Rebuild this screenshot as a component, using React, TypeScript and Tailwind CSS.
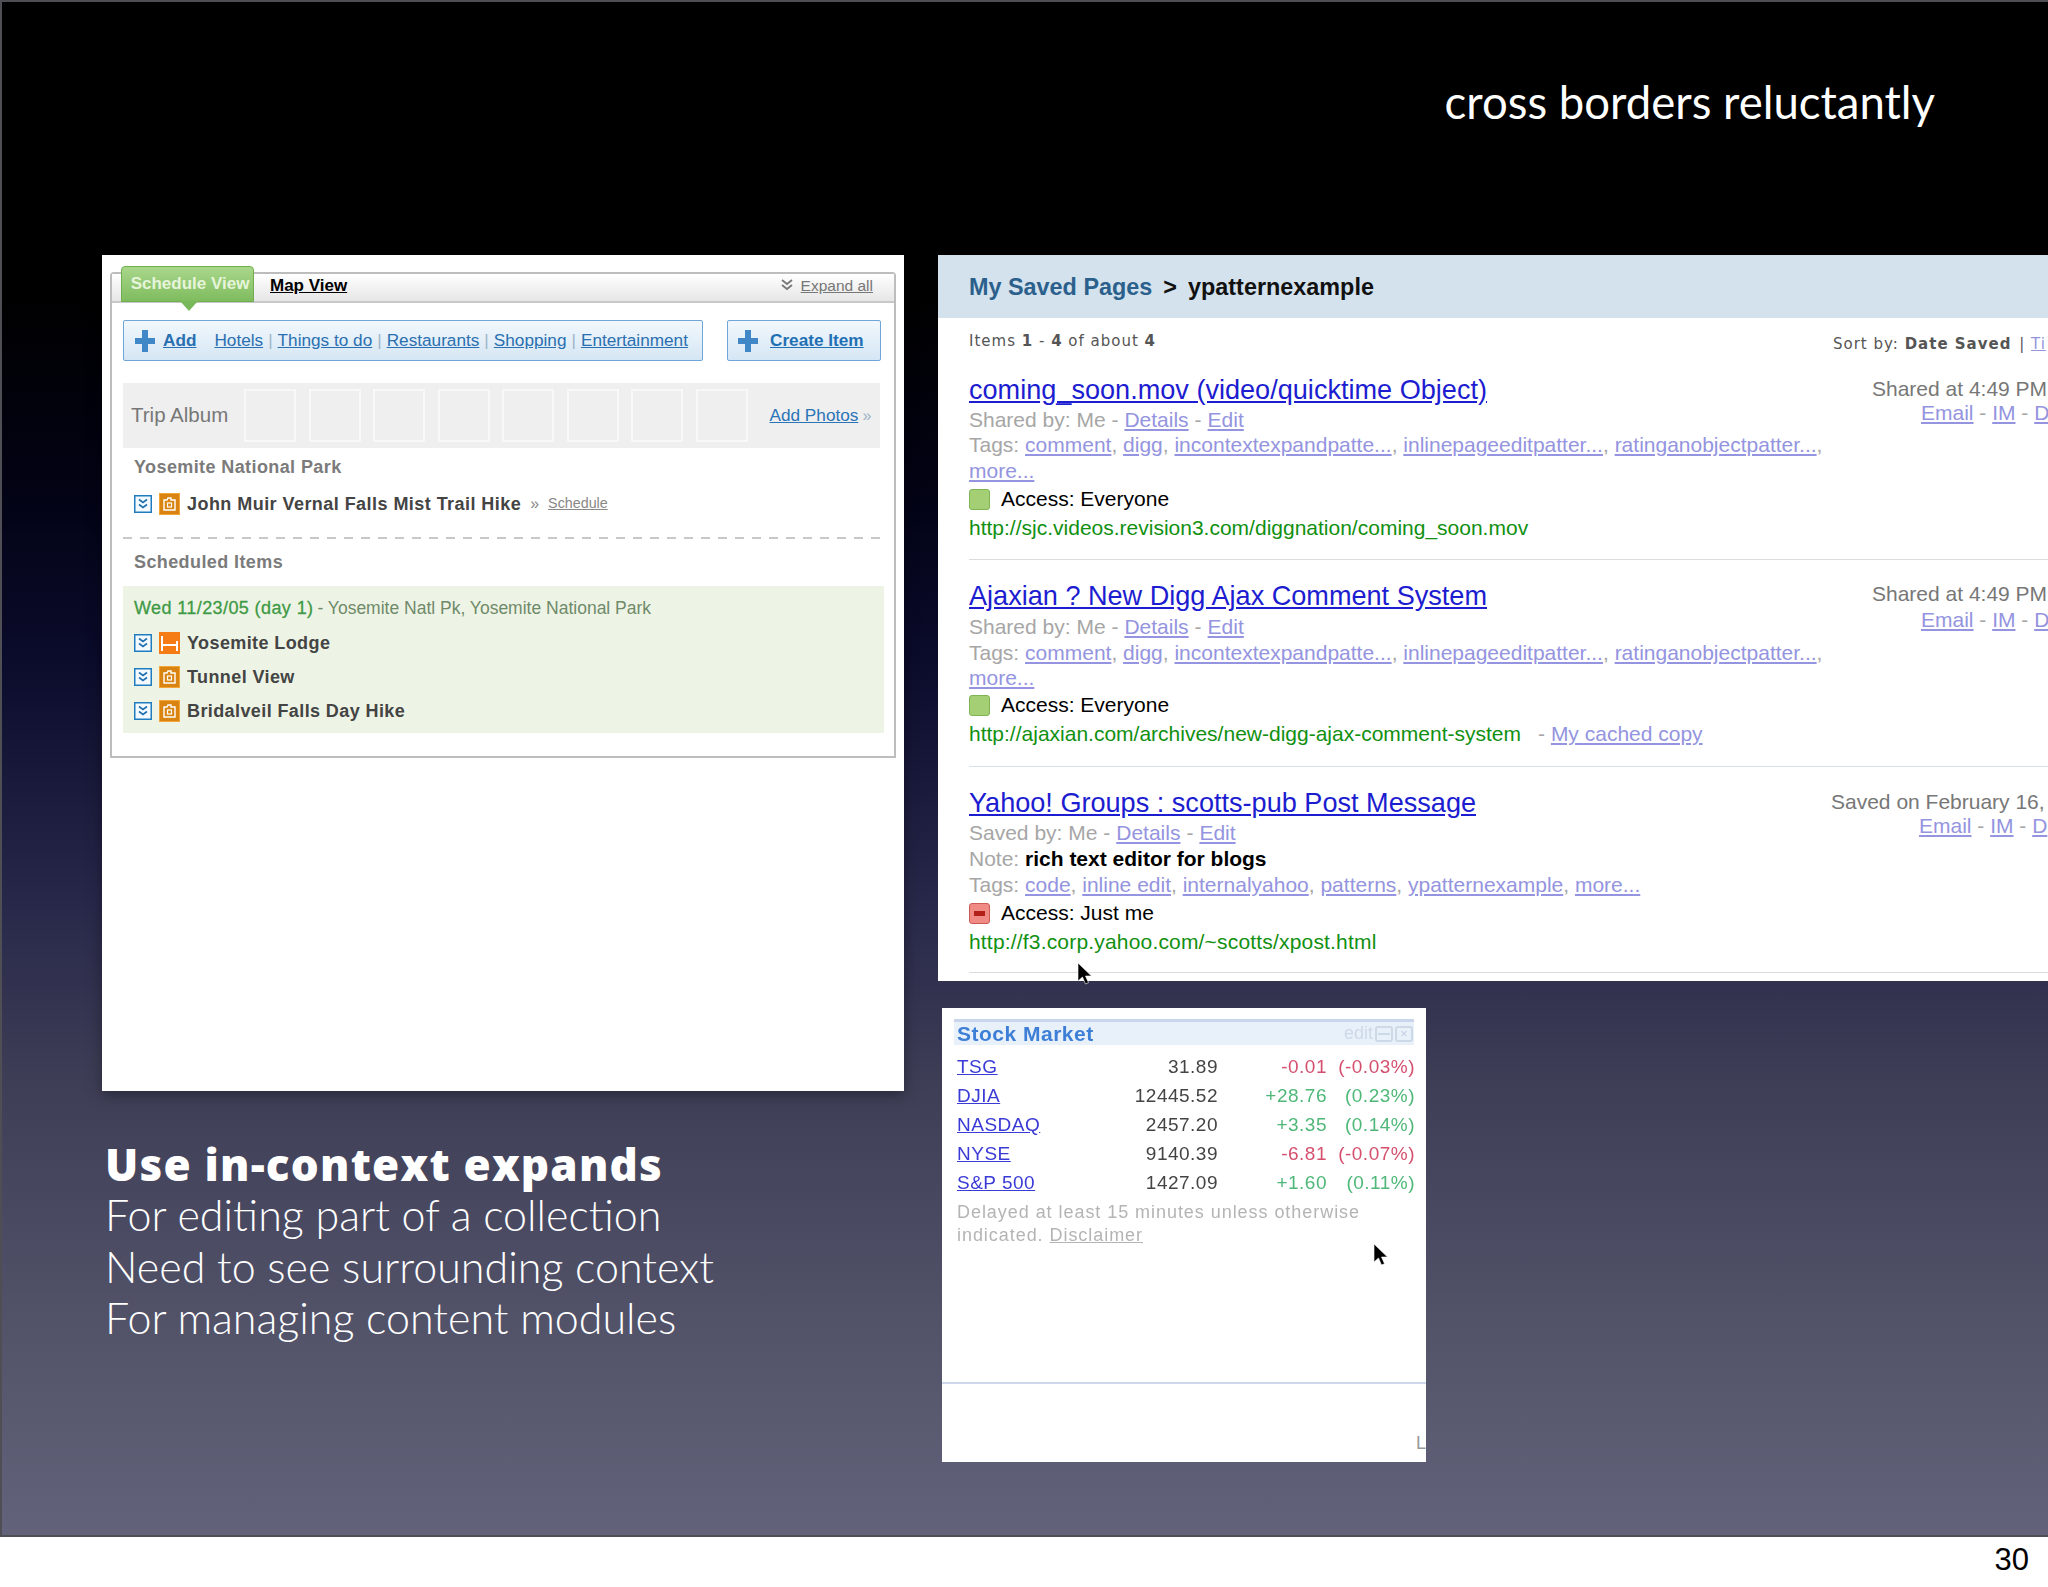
import React from 'react';

const Expander = () => (
  <svg width="18" height="18" viewBox="0 0 18 18" className="shrink-0">
    <rect x="0.75" y="0.75" width="16.5" height="16.5" fill="#f4faff" stroke="#1f7cc0" strokeWidth="1.5" />
    <path d="M5 4.5l4 3 4-3M5 9.5l4 3 4-3" fill="none" stroke="#1f6fb0" strokeWidth="1.6" />
  </svg>
);

const CameraIcon = () => (
  <svg width="21" height="22" viewBox="0 0 21 22" className="shrink-0">
    <rect width="21" height="22" fill="#d98310" />
    <rect x="0.5" y="0.5" width="20" height="21" fill="none" stroke="#f3a53a" />
    <path d="M5 7h3l1-2h3v2h4v10H5z" fill="none" stroke="#fff" strokeWidth="1.4" />
    <rect x="8.5" y="10" width="4" height="4" fill="none" stroke="#fff" strokeWidth="1.2" />
  </svg>
);

const BedIcon = () => (
  <svg width="21" height="22" viewBox="0 0 21 22" className="shrink-0">
    <rect width="21" height="22" fill="#f57c14" />
    <path d="M3 4v15M18 9v10M3 13h15" fill="none" stroke="#fff" strokeWidth="2" />
  </svg>
);

const PlusIcon = () => (
  <svg width="22" height="24" viewBox="0 0 22 24" className="shrink-0">
    <path d="M8 1h6v8h7v6h-7v8H8v-8H1V9h7z" fill="#3f87c6" />
  </svg>
);

const Cursor = ({ className }: { className: string }) => (
  <svg width="16" height="24" viewBox="0 0 16 24" className={className}>
    <path d="M1 1v18l4.5-4 3 7 3-1.3-3-6.7h6z" fill="#000" stroke="#fff" strokeWidth="0.6" />
  </svg>
);

const Sep = () => <span className="text-[#9db4c8] mx-[5px]">|</span>;

const ItemRow = ({ icon, label }: { icon: React.ReactNode; label: string }) => (
  <div className="flex items-center h-[34px] pl-[11px] gap-[7px]">
    <Expander />
    {icon}
    <span className="font-bold text-[18px] tracking-[0.4px] text-[#444]">{label}</span>
  </div>
);

const Access = ({ ok, label, className }: { ok: boolean; label: string; className: string }) => (
  <div className={`flex items-center ${className}`}>
    {ok ? (
      <span className="w-[21px] h-[21px] rounded-[3px] bg-[#a5cf74] border border-[#7fb455] shrink-0" />
    ) : (
      <span className="w-[21px] h-[21px] rounded-[3px] bg-[#f08a84] border border-[#cc5a55] shrink-0 flex items-center justify-center">
        <span className="w-[11px] h-[5px] bg-[#b3201a]" />
      </span>
    )}
    <span className="ml-[11px] text-black">{label}</span>
  </div>
);

const linkCls = 'text-[#9494e0] underline';

const TagList = ({ tags }: { tags: string[] }) => (
  <>
    Tags:{' '}
    {tags.map((t, i) => (
      <span key={t}>
        <span className={linkCls}>{t}</span>
        {i < tags.length - 1 ? ', ' : ''}
      </span>
    ))}
  </>
);

const ShareLinks = ({ className }: { className: string }) => (
  <div className={`whitespace-nowrap ${className}`}>
    <span className={linkCls}>Email</span> - <span className={linkCls}>IM</span> - <span className={linkCls}>D</span>
  </div>
);

const stocks = [
  { name: 'TSG', price: '31.89', change: '-0.01', pct: '(-0.03%)', up: false },
  { name: 'DJIA', price: '12445.52', change: '+28.76', pct: '(0.23%)', up: true },
  { name: 'NASDAQ', price: '2457.20', change: '+3.35', pct: '(0.14%)', up: true },
  { name: 'NYSE', price: '9140.39', change: '-6.81', pct: '(-0.07%)', up: false },
  { name: 'S&P 500', price: '1427.09', change: '+1.60', pct: '(0.11%)', up: true },
];

const tripTags = ['comment', 'digg', 'incontextexpandpatte...', 'inlinepageeditpatter...', 'ratinganobjectpatter...'];

const TripPlanner = () => (
  <div className="w-[802px] h-[836px] bg-white pt-[17px] pl-[8px] shadow-[0_4px_14px_rgba(0,0,0,0.35)] font-['Liberation_Sans',sans-serif]">
    <div className="w-[786px] h-[486px] border-2 border-[#bdbdbd] rounded-t-[4px]">
      {/* tabs */}
      <div className="h-[29px] bg-gradient-to-b from-white to-[#e6e6e6] border-b-2 border-[#c8c8c8] flex items-end pl-[9px]">
        <div className="relative w-[133px] h-[36px] -mb-[1px] pl-[5px] rounded-t-[4px] bg-gradient-to-b from-[#a9d78b] to-[#7fbc5e] border border-[#6fae4e] flex items-center justify-center text-[17px] font-bold text-[#e6f4da] whitespace-nowrap">
          Schedule View
          <span className="absolute top-[34px] left-[58px] w-0 h-0 border-x-[9px] border-x-transparent border-t-[10px] border-t-[#79b85a]" />
        </div>
        <span className="ml-[16px] mb-[3px] text-[17px] font-bold text-black underline">Map View</span>
        <div className="ml-auto mr-[21px] mb-[4px] flex items-center gap-[7px] text-[15.5px] text-[#777]">
          <svg width="14" height="14" viewBox="0 0 14 14">
            <path d="M2 2l5 4 5-4M2 7l5 4 5-4" fill="none" stroke="#777" strokeWidth="1.8" />
          </svg>
          <span className="underline">Expand all</span>
        </div>
      </div>

      <div className="pl-[11px]">
        {/* add bar */}
        <div className="flex gap-[24px] mt-[17px]">
          <div className="w-[580px] h-[41px] border border-[#6ea6d8] rounded-[2px] bg-gradient-to-b from-[#f2f8fd] to-[#d5e6f4] flex items-center pl-[10px] text-[17.2px] text-[#2a6fb0] whitespace-nowrap">
            <PlusIcon />
            <span className="ml-[7px] font-bold underline">Add</span>
            <span className="ml-[18px] underline">Hotels</span>
            <Sep />
            <span className="underline">Things to do</span>
            <Sep />
            <span className="underline">Restaurants</span>
            <Sep />
            <span className="underline">Shopping</span>
            <Sep />
            <span className="underline">Entertainment</span>
          </div>
          <div className="w-[154px] h-[41px] border border-[#6ea6d8] rounded-[2px] bg-gradient-to-b from-[#f2f8fd] to-[#d5e6f4] flex items-center pl-[9px] text-[17.2px] font-bold text-[#1f6fb5] whitespace-nowrap">
            <PlusIcon />
            <span className="ml-[11px] underline">Create Item</span>
          </div>
        </div>

        {/* album */}
        <div className="mt-[22px] w-[757px] h-[65px] bg-[#efefef] flex items-center pl-[8px] whitespace-nowrap">
          <span className="w-[113px] text-[20.5px] text-[#777]">Trip Album</span>
          <div className="flex gap-[12.5px]">
            {[0, 1, 2, 3, 4, 5, 6, 7].map((n) => (
              <div key={n} className="w-[52px] h-[53px] border-2 border-[#f8f8f8]" />
            ))}
          </div>
          <span className="ml-[22px] text-[17.2px] text-[#2a74b8] underline">Add Photos</span>
          <span className="ml-[4px] text-[16px] text-[#9db4c8]">»</span>
        </div>

        <div className="h-[38px] flex items-center pl-[11px] text-[18px] tracking-[0.4px] font-bold text-[#7b7b7b]">Yosemite National Park</div>
        <div className="flex items-center h-[36px] pl-[11px] gap-[7px]">
          <Expander />
          <CameraIcon />
          <span className="font-bold text-[18px] tracking-[0.45px] text-[#444]">John Muir Vernal Falls Mist Trail Hike</span>
          <span className="ml-[2px] text-[16px] text-[#888]">»</span>
          <span className="ml-[2px] text-[14.3px] text-[#888] underline">Schedule</span>
        </div>
        <div className="mt-[15px] w-[761px] h-[2px] bg-[repeating-linear-gradient(to_right,#c8c8c8_0,#c8c8c8_9px,transparent_9px,transparent_17px)]" />
        <div className="h-[47px] flex items-center pl-[11px] text-[18px] tracking-[0.4px] font-bold text-[#7b7b7b]">Scheduled Items</div>
        <div className="w-[761px] h-[147px] bg-[#eef4e5]">
          <div className="h-[40px] pt-[4px] pl-[11px] flex items-center text-[#6f8a6a] whitespace-nowrap">
            <span className="text-[18px] tracking-[0.4px] [-webkit-text-stroke:0.3px_#3f9a46] text-[#3f9a46]">Wed 11/23/05 (day 1)</span>
            <span className="ml-[4px] text-[17.5px]">- Yosemite Natl Pk, Yosemite National Park</span>
          </div>
          <ItemRow icon={<BedIcon />} label="Yosemite Lodge" />
          <ItemRow icon={<CameraIcon />} label="Tunnel View" />
          <ItemRow icon={<CameraIcon />} label="Bridalveil Falls Day Hike" />
        </div>
      </div>
    </div>
  </div>
);

const SavedPages = () => (
  <div className="w-[1110px] h-[726px] bg-white overflow-hidden font-['Liberation_Sans',sans-serif] text-[21px] text-[#a6a6a6]">
    <div className="h-[63px] pt-[2px] bg-[#d3e2ed] flex items-center pl-[31px] text-[23.4px] font-bold whitespace-nowrap">
      <span className="text-[#2b608c]">My Saved Pages</span>
      <span className="ml-[11px] text-[#111]">&gt;</span>
      <span className="ml-[11px] text-[#111]">ypatternexample</span>
    </div>
    <div className="h-[42px] flex justify-between pl-[31px] font-['DejaVu_Sans',sans-serif] text-[15px] tracking-[1px] text-[#555] whitespace-nowrap">
      <div className="pt-[12px]">
        Items <b>1</b> - <b>4</b> of about <b>4</b>
      </div>
      <div className="pt-[15px] w-[215px] shrink-0">
        Sort by: <b>Date Saved</b> <span className="ml-[2px]">|</span> <span className="text-[#9494e0] underline">Ti</span>
      </div>
    </div>

    {/* result 1 */}
    <div className="ml-[31px] flex justify-between whitespace-nowrap">
      <div>
        <div className="mt-[13px] h-[34px] flex items-center text-[27.1px] text-[#1c1cd0] underline">coming_soon.mov (video/quicktime Object)</div>
        <div className="h-[25px] flex items-center gap-[6px]">
          Shared by: Me - <span className={linkCls}>Details</span> - <span className={linkCls}>Edit</span>
        </div>
        <div className="h-[26px] leading-[26px]"><TagList tags={tripTags} />,</div>
        <div className="h-[26px] leading-[26px]"><span className={linkCls}>more...</span></div>
        <Access ok label="Access: Everyone" className="h-[30px]" />
        <div className="h-[28px] leading-[28px] text-[#119011]">http://sjc.videos.revision3.com/diggnation/coming_soon.mov</div>
      </div>
      <div className="w-[176px] shrink-0 mt-[13px]">
        <div className="h-[27px] leading-[32px] text-[#777]">Shared at 4:49 PM</div>
        <ShareLinks className="pl-[49px] leading-[26px]" />
      </div>
    </div>
    <div className="ml-[31px] mt-[17px] h-[1px] bg-[#dcdcdc]" />

    {/* result 2 */}
    <div className="ml-[31px] flex justify-between whitespace-nowrap">
      <div>
        <div className="mt-[19px] h-[34px] flex items-center text-[27.1px] text-[#1c1cd0] underline">Ajaxian ? New Digg Ajax Comment System</div>
        <div className="h-[27px] flex items-center gap-[6px]">
          Shared by: Me - <span className={linkCls}>Details</span> - <span className={linkCls}>Edit</span>
        </div>
        <div className="h-[26px] leading-[26px]"><TagList tags={tripTags} />,</div>
        <div className="h-[23px] leading-[23px]"><span className={linkCls}>more...</span></div>
        <Access ok label="Access: Everyone" className="h-[32px]" />
        <div className="h-[26px] leading-[26px]">
          <span className="text-[#119011]">http://ajaxian.com/archives/new-digg-ajax-comment-system</span>
          <span className="ml-[17px]">- </span>
          <span className={linkCls}>My cached copy</span>
        </div>
      </div>
      <div className="w-[176px] shrink-0 mt-[18px]">
        <div className="h-[29px] leading-[32px] text-[#777]">Shared at 4:49 PM</div>
        <ShareLinks className="pl-[49px] leading-[26px]" />
      </div>
    </div>
    <div className="ml-[31px] mt-[19px] h-[1px] bg-[#d4e2e6]" />

    {/* result 3 */}
    <div className="ml-[31px] flex justify-between whitespace-nowrap">
      <div>
        <div className="mt-[19px] h-[34px] flex items-center text-[27.1px] text-[#1c1cd0] underline">Yahoo! Groups : scotts-pub Post Message</div>
        <div className="h-[25px] flex items-center gap-[6px]">
          Saved by: Me - <span className={linkCls}>Details</span> - <span className={linkCls}>Edit</span>
        </div>
        <div className="h-[27px] leading-[27px]">
          Note: <b className="text-black">rich text editor for blogs</b>
        </div>
        <div className="h-[25px] leading-[25px]">
          <TagList tags={['code', 'inline edit', 'internalyahoo', 'patterns', 'ypatternexample', 'more...']} />
        </div>
        <Access ok={false} label="Access: Just me" className="h-[32px]" />
        <div className="h-[26px] leading-[26px] tracking-[0.18px] text-[#119011]">http://f3.corp.yahoo.com/~scotts/xpost.html</div>
      </div>
      <div className="w-[217px] shrink-0 mt-[19px]">
        <div className="h-[27px] leading-[32px] text-[#777]">Saved on February 16,</div>
        <ShareLinks className="pl-[88px] leading-[26px]" />
      </div>
    </div>
    <div className="ml-[31px] mt-[17px] h-[1px] bg-[#dcdcdc]" />
  </div>
);

const StockMarket = () => (
  <div className="relative ml-[4px] mt-[27px] w-[484px] h-[454px] bg-white overflow-hidden font-['Liberation_Sans',sans-serif]">
    <div className="blur-[0.7px]">
      <div className="mt-[11px] mx-[12px] h-[26px] bg-[#e8f0fa] border-t-[3px] border-[#c8d5ea] flex items-center pl-[3px]">
        <span className="text-[21px] font-bold text-[#3d7fd6] tracking-[0.5px]">Stock Market</span>
        <span className="ml-auto text-[18px] text-[#ced9e8]">edit</span>
        <span className="ml-[2px] w-[18px] h-[16px] border-2 border-[#ced9e8] rounded-[3px] flex items-center justify-center">
          <span className="w-[12px] h-[2px] bg-[#ced9e8]" />
        </span>
        <span className="ml-[2px] mr-[1px] w-[18px] h-[16px] border-2 border-[#ced9e8] rounded-[3px] flex items-center justify-center text-[#c2cfe2] text-[13px] leading-none">×</span>
      </div>
      <div className="mt-[8px] ml-[15px] w-[458px] text-[19px] tracking-[0.5px]">
        {stocks.map((s) => (
          <div key={s.name} className="h-[29px] flex items-center whitespace-nowrap">
            <span className="w-[130px] text-[#3a3ad6] underline">{s.name}</span>
            <span className="w-[131px] text-right text-[#444]">{s.price}</span>
            <span className={`w-[109px] text-right ${s.up ? 'text-[#4fb878]' : 'text-[#d4506e]'}`}>{s.change}</span>
            <span className={`w-[88px] text-right ${s.up ? 'text-[#4fb878]' : 'text-[#d4506e]'}`}>{s.pct}</span>
          </div>
        ))}
      </div>
      <div className="mt-[3px] ml-[15px] text-[18px] leading-[23px] text-[#b4b4b4] tracking-[0.95px] whitespace-nowrap">
        <div>Delayed at least 15 minutes unless otherwise</div>
        <div>indicated. <span className="underline">Disclaimer</span></div>
      </div>
    </div>
    <div className="mt-[135px] h-[2px] bg-[#cfd8ea]" />
    <div className="flex justify-end mt-[46px] h-[22px] text-[18px] text-[#999] overflow-hidden">
      <span>L</span>
    </div>
    <Cursor className="absolute left-[431px] top-[235px]" />
  </div>
);

export default function App() {
  return (
    <div className="w-[2048px] h-[1587px] bg-white overflow-hidden">
      <div className="relative h-[1537px] border-2 border-r-0 border-[#4e4e54] bg-[linear-gradient(to_bottom,#000_0%,#000_19%,#030316_32.5%,#0b0b2c_43%,#28284a_59%,#3d3d56_70%,#53536a_87%,#62627a_100%)] flex flex-col font-['Lato',sans-serif] text-white">
        <div className="h-[253px] pr-[113px] pt-[72px] flex justify-end">
          <h1 className="text-[45.5px] leading-[56px] font-normal">cross borders reluctantly</h1>
        </div>
        <div className="flex pl-[100px]">
          <div className="w-[802px]">
            <TripPlanner />
            <div className="mt-[48px] pl-[3px] text-[43px] leading-[51.5px] font-light whitespace-nowrap">
              <div className="font-['Open_Sans',sans-serif] font-extrabold text-[44px] tracking-[1.2px] leading-[50px]">Use in-context expands</div>
              <div>For editing part of a collection</div>
              <div>Need to see surrounding context</div>
              <div>For managing content modules</div>
            </div>
          </div>
          <div className="ml-[34px]">
            <SavedPages />
            <StockMarket />
          </div>
        </div>
        <Cursor className="absolute left-[1075px] top-[960px]" />
      </div>
      <div className="h-[50px] pb-[3px] flex items-center justify-end pr-[19px] font-['Liberation_Sans',sans-serif] text-[31px] text-black">30</div>
    </div>
  );
}
